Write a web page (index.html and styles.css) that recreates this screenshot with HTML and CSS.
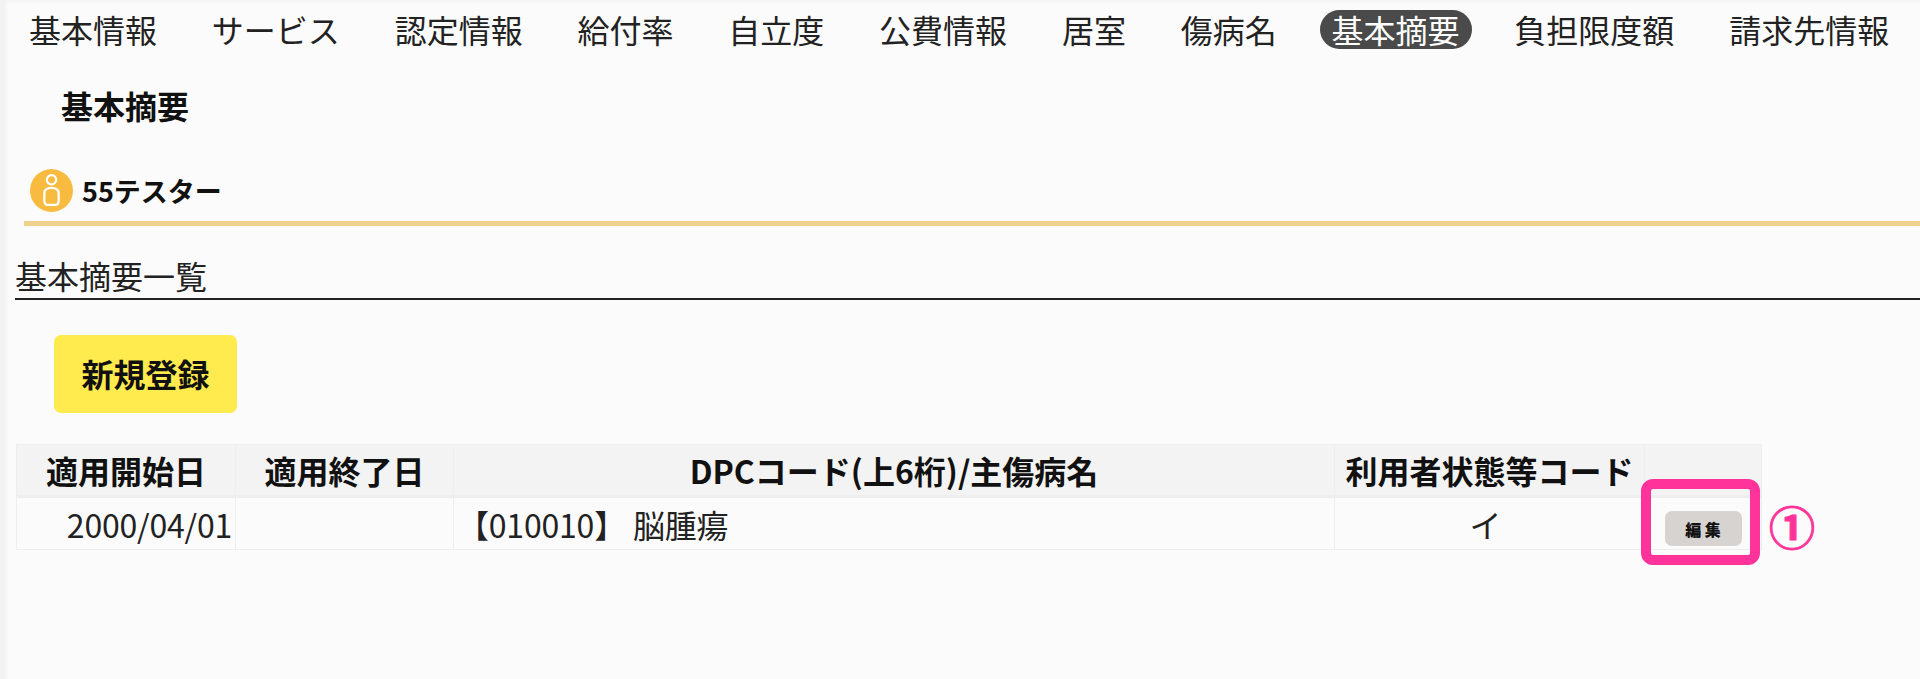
FILE: index.html
```html
<!DOCTYPE html>
<html lang="ja">
<head>
    <meta charset="UTF-8">
    <title>基本摘要</title>
    <link rel="stylesheet" href="styles.css">
</head>
<body>
    <nav class="tabs">
        <a class="tab">基本情報</a>
        <a class="tab">サービス</a>
        <a class="tab">認定情報</a>
        <a class="tab">給付率</a>
        <a class="tab">自立度</a>
        <a class="tab">公費情報</a>
        <a class="tab">居室</a>
        <a class="tab">傷病名</a>
        <a class="tab active">基本摘要</a>
        <a class="tab">負担限度額</a>
        <a class="tab">請求先情報</a>
    </nav>

    <h1 class="page-title">基本摘要</h1>

    <div class="user-bar">
        <svg class="avatar" viewBox="0 0 42 42">
            <circle cx="21" cy="21" r="21" fill="#f8bb3f"/>
            <circle cx="21" cy="10.500" r="4.500" fill="none" stroke="#fff" stroke-width="2.200"/>
            <path d="M14 31 V24 Q14 18.500 21 18.500 Q28 18.500 28 24 V31 Q28 35 24.500 35 H17.500 Q14 35 14 31 Z" fill="none" stroke="#fff" stroke-width="2.200"/>
        </svg>
        <span class="user-name">55テスター</span>
    </div>

    <h2 class="section-title">基本摘要一覧</h2>

    <button class="new-button">新規登録</button>

    <table class="summary-table">
        <tr>
            <th class="col-start">適用開始日</th>
            <th class="col-end">適用終了日</th>
            <th class="col-name">DPCコード(上6桁)/主傷病名</th>
            <th class="col-code">利用者状態等コード</th>
            <th class="col-edit"></th>
        </tr>
        <tr>
            <td class="date">2000/04/01</td>
            <td></td>
            <td class="name">【010010】 脳腫瘍</td>
            <td class="code">イ</td>
            <td class="edit">
                <button class="edit-button">編 集</button>
                <span class="callout-box"></span>
                <span class="callout-number">①</span>
            </td>
        </tr>
    </table>
</body>
</html>
```

FILE: styles.css
```css
html {
    height: 100%;
}
body {
    font-family: "Noto Sans CJK JP", "Noto Sans", sans-serif;
    color: #222;
    background-color: #fbfbfb;
    background-image: linear-gradient(to right, #f2f2f2 4px, #fbfbfb 9px), linear-gradient(to bottom, #f2f2f2, #fbfbfb 4px);
    background-size: 100% 100%;
    background-blend-mode: darken;
    margin: 0;
    min-height: 100%;
    box-sizing: border-box;
    padding: 3px 0 0 6px;
    overflow: hidden;
}
.tabs {
    display: flex;
    gap: 30.800px;
    margin-left: 11px;
    padding-top: 7px;
}
.tab {
    font-size: 32px;
    line-height: 39px;
    padding: 0 12px;
    border-radius: 20px;
}
.tab.active {
    background-color: #4a4a4a;
    color: #fff;
}
.page-title {
    font-size: 32px;
    line-height: 46px;
    font-weight: bold;
    margin: 33px 0 0 55px;
    color: #111;
}
.user-bar {
    display: flex;
    align-items: center;
    gap: 9px;
    margin: 41px 0 0 18px;
    padding: 0 0 9px 6px;
    border-bottom: 5px solid #eed28e;
}
.avatar {
    width: 43px;
    height: 43px;
}
.user-name {
    font-size: 27px;
    font-weight: bold;
    color: #111;
}
.section-title {
    font-size: 32px;
    font-weight: normal;
    line-height: 46px;
    margin: 26px 0 0 9px;
    border-bottom: 2px solid #222;
}
.new-button {
    display: block;
    width: 183px;
    height: 78px;
    margin: 35px 0 0 48px;
    padding: 0 0 3px;
    border: none;
    border-radius: 7px;
    background-color: #ffeb4d;
    font-family: inherit;
    font-size: 32px;
    font-weight: bold;
    color: #111;
}
.summary-table {
    border-collapse: collapse;
    table-layout: fixed;
    width: 1745px;
    margin: 31px 0 0 10px;
}
.summary-table th, .summary-table td {
    border: 1px solid #eee;
    font-size: 32px;
    line-height: 46px;
    padding: 0 3px;
    height: 53px;
    box-sizing: border-box;
}
.summary-table th {
    background-color: #f3f3f3;
    font-weight: bold;
    color: #111;
    border-bottom: 3px solid #eee;
    height: 52px;
}
.col-start { width: 219px; }
.col-end { width: 218px; }
.col-name { width: 881px; }
.col-code { width: 310px; }
.col-edit { width: 117px; }
.date {
    text-align: right;
    letter-spacing: -0.200px;
}
.name {
    letter-spacing: -0.200px;
}
.code {
    text-align: center;
    padding-right: 11px !important;
}
.edit {
    position: relative;
    text-align: center;
}
.edit-button {
    width: 77px;
    height: 35px;
    border: none;
    border-radius: 7px;
    background-color: #d6d3d1;
    font-family: inherit;
    font-size: 16px;
    font-weight: 900;
    color: #111;
    vertical-align: middle;
}
.callout-box {
    position: absolute;
    left: -4px;
    top: -19px;
    width: 119px;
    height: 86px;
    box-sizing: border-box;
    border: 10px solid #ff3399;
    border-radius: 12px;
}
.callout-number {
    position: absolute;
    left: 124px;
    top: -3px;
    font-size: 46px;
    line-height: 60px;
    font-weight: bold;
    color: #ff3399;
    -webkit-text-stroke: 1px #ff3399;
}
```
